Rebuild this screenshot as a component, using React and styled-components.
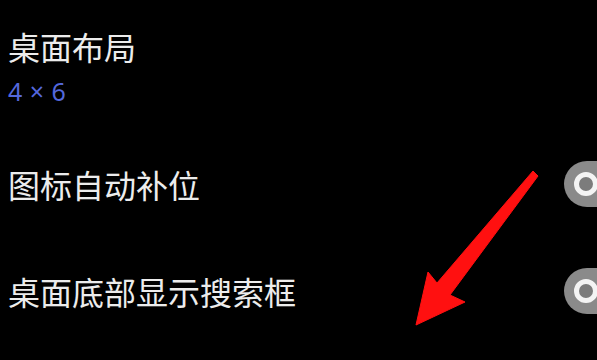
import React from "react";
import styled, { createGlobalStyle } from "styled-components";

const Global = createGlobalStyle`
  html, body { margin: 0; padding: 0; background: #000; }
  body { width: 597px; height: 360px; overflow: hidden; }
  #root { position: relative; width: 597px; height: 360px; overflow: hidden; }
`;

const Page = styled.div`
  width: 597px;
  height: 360px;
  background: #000;
  overflow: hidden;
  font-family: "Noto Sans CJK SC", "Noto Sans", sans-serif;
  padding-top: 26px;
  box-sizing: border-box;
`;

const Header = styled.div`
  display: flex;
  flex-direction: column;
  gap: 10px;
  padding-left: 8px;
`;

const Title = styled.div`
  color: #ececec;
  font-size: 32px;
  line-height: 40px;
  white-space: nowrap;
`;

const Sub = styled.div`
  color: #5468dc;
  font-family: "Noto Sans", "DejaVu Sans", sans-serif;
  font-size: 25px;
  line-height: 30px;
  letter-spacing: 0.5px;
`;

const Row = styled.div`
  display: flex;
  align-items: center;
  justify-content: space-between;
  height: 107px;
  padding-left: 8px;
  margin-top: ${p => p.$first ? "24px" : "0"};
`;

const Toggle = styled.div`
  width: 80px;
  height: 46px;
  border-radius: 23px;
  background: #8a8a8a;
  margin-right: -47px;
  display: flex;
  align-items: center;
  padding-left: 10px;
  box-sizing: border-box;
  flex-shrink: 0;
`;

const Knob = styled.div`
  width: 24px;
  height: 24px;
  border-radius: 50%;
  box-sizing: border-box;
  border: 5px solid #f4f4f4;
  background: #7c7c7c;
`;

const Arrow = styled.svg`
  position: absolute;
  left: 0;
  top: 0;
  width: 597px;
  height: 360px;
  pointer-events: none;
`;

export default function App() {
  return (
    <>
      <Global />
      <Page>
        <Header>
          <Title>桌面布局</Title>
          <Sub>4 × 6</Sub>
        </Header>
        <Row $first>
          <Title>图标自动补位</Title>
          <Toggle><Knob /></Toggle>
        </Row>
        <Row>
          <Title>桌面底部显示搜索框</Title>
          <Toggle><Knob /></Toggle>
        </Row>
      </Page>
      <Arrow viewBox="0 0 597 360">
        <polygon
          points="416,325 428,272 437,283 533,171 538,176 450,295 465,302"
          fill="#ff1010"
          stroke="#ff1010"
          strokeWidth="1"
          strokeLinejoin="round"
        />
      </Arrow>
    </>
  );
}
